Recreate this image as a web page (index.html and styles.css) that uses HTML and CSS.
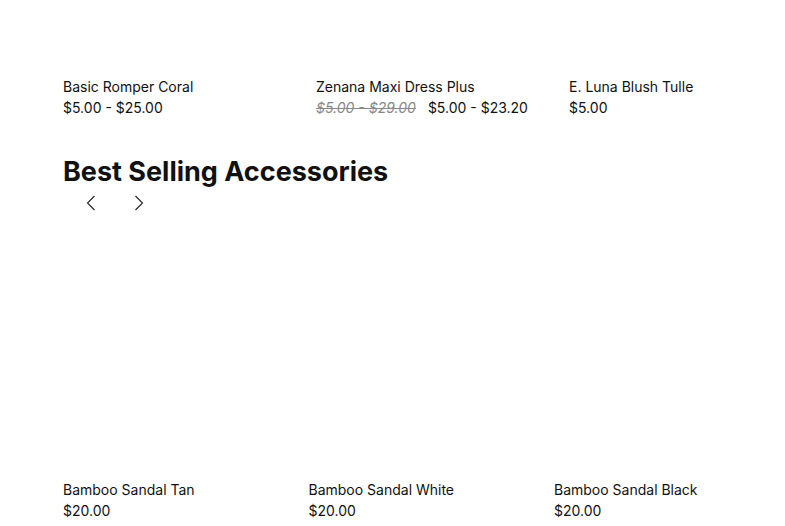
FILE: index.html
```html
<!DOCTYPE html>
<html>
<head>
<meta charset="utf-8">
<link rel="stylesheet" href="styles.css">
</head>
<body>
<div class="page">
  <div class="row row-top">
    <div class="card">
      <div class="card-img img-top"></div>
      <div class="name">Basic Romper Coral</div>
      <div class="price">$5.00 - $25.00</div>
    </div>
    <div class="card">
      <div class="card-img img-top"></div>
      <div class="name">Zenana Maxi Dress Plus</div>
      <div class="price"><s class="old">$5.00 - $29.00</s><span>$5.00 - $23.20</span></div>
    </div>
    <div class="card">
      <div class="card-img img-top"></div>
      <div class="name">E. Luna Blush Tulle</div>
      <div class="price">$5.00</div>
    </div>
  </div>

  <h2 class="heading">Best Selling Accessories</h2>
  <div class="arrows">
    <button class="arrow" aria-label="Previous">
      <svg width="10" height="16" viewBox="0 0 10 16"><path d="M8.5 1 L1.5 8 L8.5 15" fill="none" stroke="#222" stroke-width="1.1"/></svg>
    </button>
    <button class="arrow" aria-label="Next">
      <svg width="10" height="16" viewBox="0 0 10 16"><path d="M1.5 1 L8.5 8 L1.5 15" fill="none" stroke="#222" stroke-width="1.1"/></svg>
    </button>
  </div>

  <div class="row row-bottom">
    <div class="card">
      <div class="card-img img-bottom"></div>
      <div class="name">Bamboo Sandal Tan</div>
      <div class="price">$20.00</div>
    </div>
    <div class="card">
      <div class="card-img img-bottom"></div>
      <div class="name">Bamboo Sandal White</div>
      <div class="price">$20.00</div>
    </div>
    <div class="card">
      <div class="card-img img-bottom"></div>
      <div class="name">Bamboo Sandal Black</div>
      <div class="price">$20.00</div>
    </div>
  </div>
</div>
</body>
</html>
```

FILE: styles.css
```css
html, body {
  margin: 0;
  padding: 0;
  background: #fff;
  overflow: hidden;
}
body {
  font-family: Inter, "Noto Sans", sans-serif;
  color: #111;
}
.page {
  padding-left: 63px;
}
.row {
  display: flex;
}
.row-top .card {
  width: 253px;
  flex: none;
}
.row-bottom .card {
  width: 245.5px;
  flex: none;
}
.card-img {
  background: #fff;
}
.img-top {
  height: 76px;
}
.img-bottom {
  height: 264px;
}
.name, .price {
  font-size: 14px;
  line-height: 21px;
  white-space: nowrap;
}
.old {
  color: #888;
  font-style: italic;
  margin-right: 12px;
}
.heading {
  margin: 37px 0 0;
  font-size: 27px;
  line-height: 34px;
  font-weight: 700;
}
.arrows {
  display: flex;
  gap: 24px;
  margin: 2px 0 0 16px;
}
.arrow {
  width: 24px;
  height: 24px;
  padding: 0;
  border: 0;
  background: none;
  display: flex;
  align-items: center;
  justify-content: center;
}
```
